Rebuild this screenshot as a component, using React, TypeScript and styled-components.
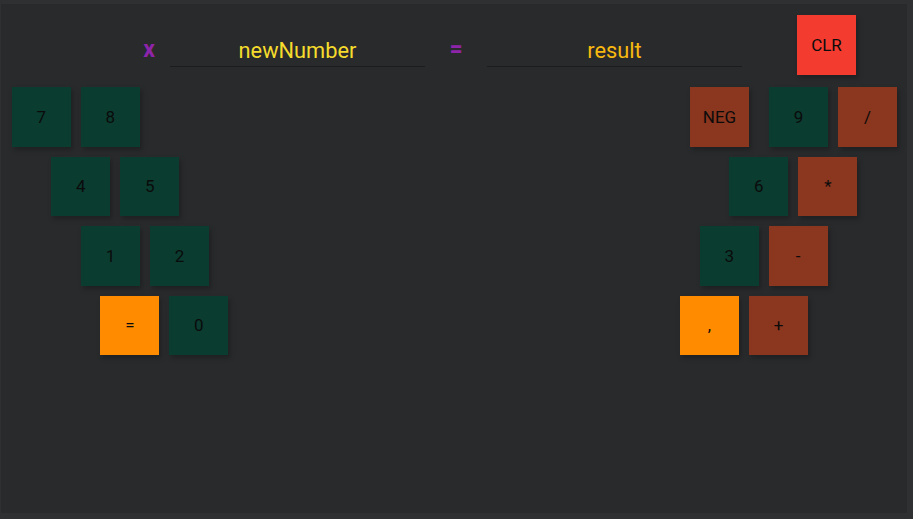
import React from "react";
import styled, { createGlobalStyle } from "styled-components";

const Global = createGlobalStyle`
  html, body {
    margin: 0;
    padding: 0;
    background: #2f3032;
    font-family: Roboto, "Noto Sans", sans-serif;
  }
`;

const Frame = styled.div`
  width: 906px;
  height: 509px;
  margin: 4px 0 0 1px;
  background: #292a2c;
  box-sizing: border-box;
  padding-top: 11px;
`;

const Header = styled.div`
  display: flex;
  align-items: flex-start;
  height: 60px;
  padding-left: 127px;
`;

const Operator = styled.div<{ $w: number }>`
  width: ${(p) => p.$w}px;
  margin-top: 22px;
  text-align: center;
  color: #8e24aa;
  font-weight: 700;
  font-size: 23px;
  line-height: 26px;
`;

const Field = styled.div<{ $color: string }>`
  width: 255px;
  margin-top: 21px;
  padding: 2px 0 2px;
  box-sizing: border-box;
  border-bottom: 1px solid #1b1c1e;
  color: ${(p) => p.$color};
  font-size: 21.8px;
  text-align: center;
  line-height: 26px;
`;

const Spacer = styled.div`
  width: 55px;
`;

const Keypads = styled.div`
  display: flex;
  justify-content: space-between;
  margin-top: 12px;
  padding-right: 10px;
`;

const Pad = styled.div`
  display: flex;
  flex-direction: column;
  gap: 10px;
`;

const RightPad = styled(Pad)`
  width: 217px;
`;

const Row = styled.div<{ $indent: number }>`
  display: flex;
  gap: 10px;
  margin-left: ${(p) => p.$indent}px;
`;

const colors: Record<string, string> = {
  num: "#0a3c30",
  op: "#8b361e",
  accent: "#ff8c00",
  clear: "#f43b30",
};

const Key = styled.button<{ $variant: string; $wide?: boolean }>`
  width: 59px;
  height: 59.5px;
  flex: none;
  border: none;
  padding: 0;
  margin-right: ${(p) => (p.$wide ? 10 : 0)}px;
  background: ${(p) => colors[p.$variant]};
  color: #0b0b0b;
  font-family: Roboto, "Noto Sans", sans-serif;
  font-size: 17px;
  box-shadow: 2px 3px 5px rgba(0, 0, 0, 0.25);
  display: flex;
  align-items: center;
  justify-content: center;
  cursor: pointer;
`;

type K = { label: string; v: string; wide?: boolean };
type R = { indent: number; keys: K[] };

const leftRows: R[] = [
  { indent: 10.7, keys: [{ label: "7", v: "num" }, { label: "8", v: "num" }] },
  { indent: 50.3, keys: [{ label: "4", v: "num" }, { label: "5", v: "num" }] },
  { indent: 80, keys: [{ label: "1", v: "num" }, { label: "2", v: "num" }] },
  { indent: 99.3, keys: [{ label: "=", v: "accent" }, { label: "0", v: "num" }] },
];

const rightRows: R[] = [
  {
    indent: 10,
    keys: [
      { label: "NEG", v: "op", wide: true },
      { label: "9", v: "num" },
      { label: "/", v: "op" },
    ],
  },
  { indent: 49.3, keys: [{ label: "6", v: "num" }, { label: "*", v: "op" }] },
  { indent: 19.7, keys: [{ label: "3", v: "num" }, { label: "-", v: "op" }] },
  { indent: 0, keys: [{ label: ",", v: "accent" }, { label: "+", v: "op" }] },
];

function PadRows({ rows }: { rows: R[] }) {
  return (
    <>
      {rows.map((r, i) => (
        <Row key={i} $indent={r.indent}>
          {r.keys.map((k) => (
            <Key key={k.label} $variant={k.v} $wide={k.wide}>
              {k.label}
            </Key>
          ))}
        </Row>
      ))}
    </>
  );
}

export default function App() {
  return (
    <>
      <Global />
      <Frame>
        <Header>
          <Operator $w={42}>x</Operator>
          <Field $color="#f5dc2c">newNumber</Field>
          <Operator $w={62}>=</Operator>
          <Field $color="#f7b90f">result</Field>
          <Spacer />
          <Key $variant="clear">CLR</Key>
        </Header>
        <Keypads>
          <Pad>
            <PadRows rows={leftRows} />
          </Pad>
          <RightPad>
            <PadRows rows={rightRows} />
          </RightPad>
        </Keypads>
      </Frame>
    </>
  );
}
